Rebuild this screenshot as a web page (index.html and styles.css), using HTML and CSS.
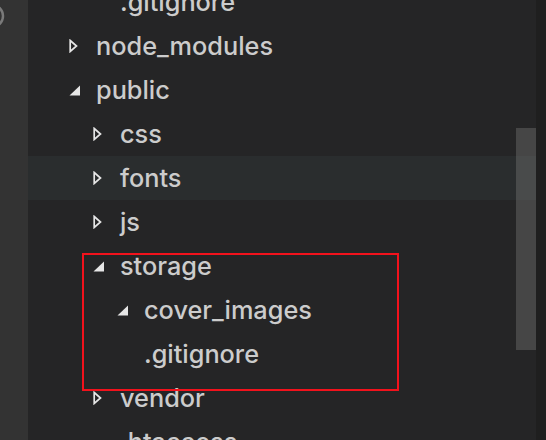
FILE: index.html
```html
<!DOCTYPE html>
<html>
<head>
<meta charset="utf-8">
<link rel="stylesheet" href="styles.css">
</head>
<body>
<div class="window">
  <div class="activity">
    <svg class="act-icon" width="6" height="30" viewBox="0 0 6 30"><path d="M-8 5 A11 11 0 0 1 -8 27" fill="none" stroke="#7a7a7a" stroke-width="2.5"/></svg>
  </div>
  <div class="sidebar">
    <div class="tree">
      <div class="row file f2"><span class="label">.gitignore</span></div>
      <div class="row l1"><span class="twistie"><svg width="9" height="14" viewBox="0 0 9 14"><path d="M1.2 1.5 L7.5 7 L1.2 12.5 Z" fill="none" stroke="#e6e6e6" stroke-width="1.7" stroke-linejoin="miter"/></svg></span><span class="label">node_modules</span></div>
      <div class="row l1"><span class="twistie"><svg width="11" height="11" viewBox="0 0 11 11"><path d="M11 0.5 L11 10.5 L0.5 10.5 Z" fill="#e6e6e6"/></svg></span><span class="label">public</span></div>
      <div class="row l2"><span class="twistie"><svg width="9" height="14" viewBox="0 0 9 14"><path d="M1.2 1.5 L7.5 7 L1.2 12.5 Z" fill="none" stroke="#e6e6e6" stroke-width="1.7"/></svg></span><span class="label">css</span></div>
      <div class="row l2 hover"><span class="twistie"><svg width="9" height="14" viewBox="0 0 9 14"><path d="M1.2 1.5 L7.5 7 L1.2 12.5 Z" fill="none" stroke="#e6e6e6" stroke-width="1.7"/></svg></span><span class="label">fonts</span></div>
      <div class="row l2"><span class="twistie"><svg width="9" height="14" viewBox="0 0 9 14"><path d="M1.2 1.5 L7.5 7 L1.2 12.5 Z" fill="none" stroke="#e6e6e6" stroke-width="1.7"/></svg></span><span class="label">js</span></div>
      <div class="row l2"><span class="twistie"><svg width="11" height="11" viewBox="0 0 11 11"><path d="M11 0.5 L11 10.5 L0.5 10.5 Z" fill="#e6e6e6"/></svg></span><span class="label">storage</span></div>
      <div class="row l3"><span class="twistie"><svg width="11" height="11" viewBox="0 0 11 11"><path d="M11 0.5 L11 10.5 L0.5 10.5 Z" fill="#e6e6e6"/></svg></span><span class="label">cover_images</span></div>
      <div class="row file f3"><span class="label">.gitignore</span></div>
      <div class="row l2"><span class="twistie"><svg width="9" height="14" viewBox="0 0 9 14"><path d="M1.2 1.5 L7.5 7 L1.2 12.5 Z" fill="none" stroke="#e6e6e6" stroke-width="1.7"/></svg></span><span class="label">vendor</span></div>
      <div class="row file f2"><span class="label">.htaccess</span></div>
    </div>
    <div class="scrollbar"></div>
    <div class="highlight"></div>
  </div>
  <div class="edge"></div>
</div>
</body>
</html>
```

FILE: styles.css
```css
html, body {
  margin: 0;
  padding: 0;
  background: #252526;
}
.window {
  display: flex;
  width: 546px;
  height: 440px;
  overflow: hidden;
}
.activity {
  width: 28px;
  flex: none;
  background: #333333;
  position: relative;
}
.act-icon {
  position: absolute;
  left: 0;
  top: 0;
}
.sidebar {
  flex: 1;
  position: relative;
  background: #252526;
  overflow: hidden;
}
.edge {
  width: 10px;
  flex: none;
  background: #1f1f1f;
}
.tree {
  margin-top: -20px;
  display: flex;
  flex-direction: column;
}
.row {
  height: 44px;
  display: flex;
  align-items: center;
  box-sizing: border-box;
  font-family: "Inter", "Liberation Sans", sans-serif;
  font-size: 25.3px;
  font-weight: 500;
  color: #cccccc;
  white-space: nowrap;
}
.row.hover {
  background: #2a2d2e;
}
.l1 { padding-left: 41px; }
.l2 { padding-left: 65px; }
.l3 { padding-left: 89px; }
.f2 { padding-left: 92px; }
.f3 { padding-left: 116px; }
.twistie {
  width: 27px;
  flex: none;
  display: flex;
  align-items: center;
}
.twistie svg {
  display: block;
}
.label {
  line-height: 44px;
}
.scrollbar {
  position: absolute;
  right: 0;
  top: 128px;
  width: 20px;
  height: 222px;
  background: rgba(121, 121, 121, 0.4);
}
.highlight {
  position: absolute;
  left: 54px;
  top: 253px;
  width: 313px;
  height: 134px;
  border: 2px solid #f2121c;
}
```
